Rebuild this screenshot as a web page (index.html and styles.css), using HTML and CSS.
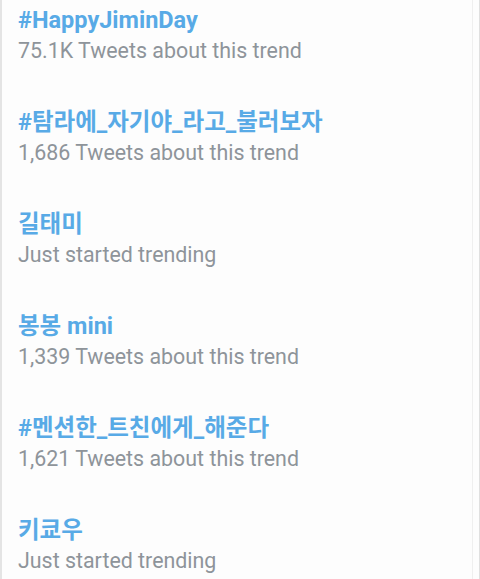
FILE: index.html
```html
<!DOCTYPE html>
<html lang="ko">
<head>
    <meta charset="UTF-8">
    <meta name="viewport" content="width=device-width, initial-scale=1.0">
    <title>Trends</title>
    <link rel="stylesheet" href="styles.css">
</head>
<body>

<div class="trends">
    <div class="trend">
        <div class="trend-name">#HappyJiminDay</div>
        <div class="trend-meta">75.1K Tweets about this trend</div>
    </div>
    <div class="trend">
        <div class="trend-name">#탐라에_자기야_라고_불러보자</div>
        <div class="trend-meta">1,686 Tweets about this trend</div>
    </div>
    <div class="trend">
        <div class="trend-name">길태미</div>
        <div class="trend-meta">Just started trending</div>
    </div>
    <div class="trend">
        <div class="trend-name">봉봉 mini</div>
        <div class="trend-meta">1,339 Tweets about this trend</div>
    </div>
    <div class="trend">
        <div class="trend-name">#멘션한_트친에게_해준다</div>
        <div class="trend-meta">1,621 Tweets about this trend</div>
    </div>
    <div class="trend">
        <div class="trend-name">키쿄우</div>
        <div class="trend-meta">Just started trending</div>
    </div>
</div>

</body>
</html>
```

FILE: styles.css
```css
body {
    margin: 0;
    background: #fdfdfd;
    font-family: Roboto, "Noto Sans CJK KR", sans-serif;
}
.trends {
    height: 579px;
    overflow: hidden;
    border-left: 2px solid #e4e4e4;
    border-right: 1px solid #e0e0e0;
    box-shadow: inset -6px 0 0 #fdfdfd, inset -7px 0 0 #efefef;
}
.trend {
    height: 102px;
    padding: 5px 0 0 16px;
    box-sizing: border-box;
}
.trend-name {
    color: #58aae6;
    font-size: 23.5px;
    font-weight: bold;
    line-height: 30px;
}
.trend-meta {
    color: #8e949a;
    font-size: 21.4px;
    line-height: 32px;
}
```
